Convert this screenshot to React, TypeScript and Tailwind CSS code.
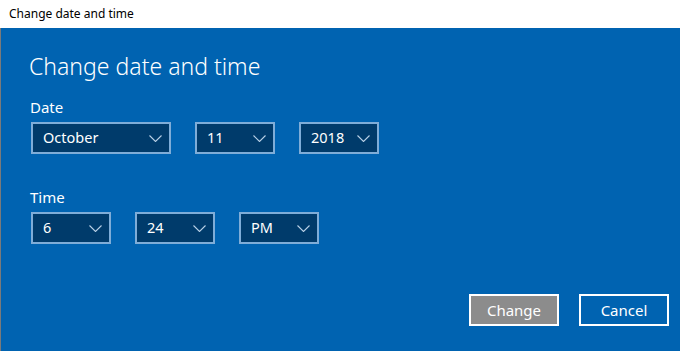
const Chevron = () => (
  <svg width="13" height="7" viewBox="0 0 13 7" className="shrink-0">
    <polyline points="0.5,0.5 6.5,6.5 12.5,0.5" fill="none" stroke="#b9d0e6" strokeWidth="1.1" />
  </svg>
);

const Select = ({ value, width }: { value: string; width: string }) => (
  <div
    className={`${width} h-[32px] flex items-center justify-between pl-[10px] pr-[7px] border-2 border-[#7fadd8] bg-[#003b6b] text-white text-[14.5px]`}
  >
    <span>{value}</span>
    <Chevron />
  </div>
);

export default function App() {
  return (
    <div
      className="w-[680px] h-[351px] flex flex-col overflow-hidden"
      style={{ fontFamily: '"Segoe UI", "Noto Sans", "Open Sans", sans-serif' }}
    >
      <div className="h-[28px] bg-white flex items-center px-[9px] text-[12px] text-black">
        Change date and time
      </div>

      <div className="flex-1 flex flex-col bg-[#0063b1] border-l border-[#7a7a7a] pl-[30px] pr-[11px] text-white">
        <h1 className="mt-[22px] -ml-[2px] text-[23px] font-light leading-[32px]">Change date and time</h1>

        <div className="mt-[15px] -ml-[1px] text-[15px] leading-[20px]">Date</div>
        <div className="mt-[5px] flex gap-[24px]">
          <Select value="October" width="w-[140px]" />
          <Select value="11" width="w-[80px]" />
          <Select value="2018" width="w-[80px]" />
        </div>

        <div className="mt-[33px] -ml-[1px] text-[15px] leading-[20px]">Time</div>
        <div className="mt-[5px] flex gap-[24px]">
          <Select value="6" width="w-[80px]" />
          <Select value="24" width="w-[80px]" />
          <Select value="PM" width="w-[80px]" />
        </div>

        <div className="mt-auto mb-[25px] flex justify-end gap-[20px]">
          <button className="w-[90px] h-[32px] border-2 border-white bg-[#8c8c8c] text-[15px] text-white">
            Change
          </button>
          <button className="w-[90px] h-[32px] border-2 border-white text-[15px] text-white">
            Cancel
          </button>
        </div>
      </div>
    </div>
  );
}
